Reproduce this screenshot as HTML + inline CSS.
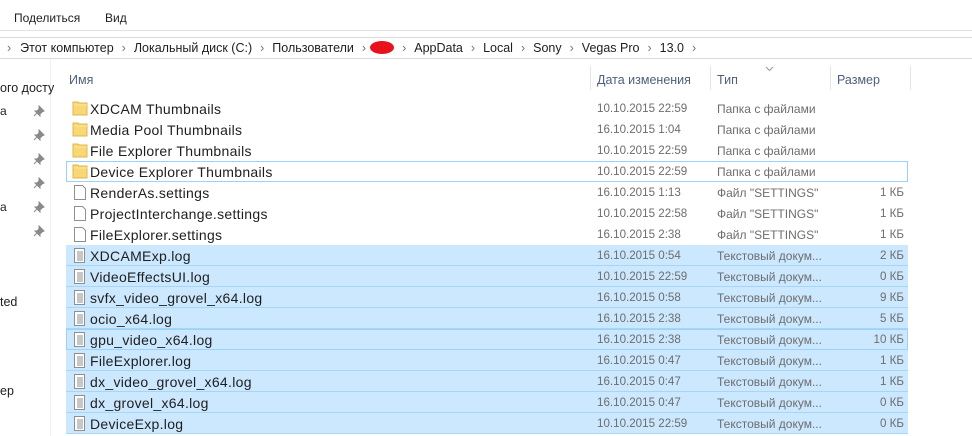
<!DOCTYPE html>
<html><head><meta charset="utf-8"><style>
*{margin:0;padding:0;box-sizing:border-box}
body{width:972px;height:436px;background:#fff;font-family:"Liberation Sans",sans-serif;font-size:12px;color:#1e1e1e;position:relative;overflow:hidden}
.a{position:absolute;white-space:nowrap}
.row{position:absolute;left:66px;width:842px;height:21px}
.sel{background:#cce8ff;border-bottom:1px solid #a9d5f5}
.n{position:absolute;left:24px;top:3px;font-size:14px;letter-spacing:.3px}
.d{position:absolute;left:531px;top:4px;color:#6d6d6d;font-size:11.6px}
.t{position:absolute;left:651px;top:4px;color:#6d6d6d}
.s{position:absolute;right:4px;top:4px;color:#6d6d6d;font-size:11.6px}
.ic{position:absolute;left:6px;top:2px}
.pin{position:absolute;left:33px}
</style></head><body>
<div class="a" style="left:14px;top:11px;font-size:12px">Поделиться</div>
<div class="a" style="left:105px;top:11px;font-size:12px">Вид</div>
<div class="a" style="left:0;top:30px;width:972px;height:1px;background:#e3e3e3"></div>
<div class="a" style="left:0;top:37px;width:972px;height:1px;background:#d9d9d9"></div>
<div class="a" style="left:0;top:58px;width:972px;height:1px;background:#d9d9d9"></div>
<div class="a" style="left:0;top:41px;font-size:12.5px;word-spacing:0">
<span style="color:#777;margin:0 9px 0 7px">›</span>Этот компьютер<span style="color:#777;margin:0 8px">›</span>Локальный диск (C:)<span style="color:#777;margin:0 8px">›</span>Пользователи<span style="color:#777;margin:0 4px 0 8px">›</span><span style="display:inline-block;width:24px;height:13px;background:#e8101a;border-radius:50%;vertical-align:-2px"></span><span style="color:#777;margin:0 8px">›</span>AppData<span style="color:#777;margin:0 8px">›</span>Local<span style="color:#777;margin:0 8px">›</span>Sony<span style="color:#777;margin:0 8px">›</span>Vegas Pro<span style="color:#777;margin:0 8px">›</span>13.0<span style="color:#777;margin:0 8px">›</span></div>
<div class="a" style="left:50px;top:59px;width:1px;height:377px;background:#f0f0f0"></div>
<div class="a" style="left:0;top:81px;font-size:12.5px">ого досту</div>
<div class="a" style="left:0;top:104px">а</div>
<div class="a" style="left:0;top:200px">а</div>
<div class="a" style="left:0;top:295px;font-size:12.5px">ted</div>
<div class="a" style="left:0;top:384px;font-size:12.5px">ер</div>
<div id="pins"></div>
<div class="a" style="left:69px;top:73px;color:#4c607a;font-size:12.5px">Имя</div>
<div class="a" style="left:597px;top:73px;color:#4c607a;font-size:12.5px">Дата изменения</div>
<div class="a" style="left:717px;top:73px;color:#4c607a;font-size:12.5px">Тип</div>
<div class="a" style="left:837px;top:73px;color:#4c607a;font-size:12.5px">Размер</div>
<svg class="a" style="left:765px;top:66px" width="9" height="6"><path d="M1 1l3.5 3.5L8 1" fill="none" stroke="#999"/></svg>
<div class="a" style="left:590px;top:66px;width:1px;height:24px;background:#e5e5e5"></div>
<div class="a" style="left:710px;top:66px;width:1px;height:24px;background:#e5e5e5"></div>
<div class="a" style="left:830px;top:66px;width:1px;height:24px;background:#e5e5e5"></div>
<div class="a" style="left:910px;top:66px;width:1px;height:24px;background:#e5e5e5"></div>
<div id="rows"></div>
<script>
var ph='';
[104,128,152,176,200,224].forEach(function(y){ph+='<svg class="a pin" style="top:'+(y+1)+'px" width="12" height="12"><path d="M6 1l5 5-2 1-2 2 0 2-5-5 2 0 2-2z M4 8L1 11" fill="#8a8a8a" stroke="#8a8a8a" stroke-width="1"/></svg>';});
document.getElementById('pins').innerHTML=ph;
var F='<svg class="ic" width="16" height="16"><path d="M1 2h5l1 1h8v12H1z" fill="#f8d775" stroke="#e0b44c"/><path d="M2 5h13" stroke="#fbe6a5"/></svg>';
var P='<svg class="ic" width="16" height="16"><path d="M2.5 1.5h8l3 3v11h-11z" fill="#fff" stroke="#8f8f8f"/></svg>';
var L='<svg class="ic" width="16" height="16"><path d="M2.5 1.5h10v14h-10z" fill="#fff" stroke="#8f8f8f"/><path d="M5 5h6M5 7h6M5 9h6M5 11h6M5 13h6" stroke="#8f8f8f"/></svg>';
var d=[
[F,'XDCAM Thumbnails','10.10.2015 22:59','Папка с файлами','',0],
[F,'Media Pool Thumbnails','16.10.2015 1:04','Папка с файлами','',0],
[F,'File Explorer Thumbnails','10.10.2015 22:59','Папка с файлами','',0],
[F,'Device Explorer Thumbnails','10.10.2015 22:59','Папка с файлами','',2],
[P,'RenderAs.settings','16.10.2015 1:13','Файл "SETTINGS"','1 КБ',0],
[P,'ProjectInterchange.settings','10.10.2015 22:58','Файл "SETTINGS"','1 КБ',0],
[P,'FileExplorer.settings','16.10.2015 2:38','Файл "SETTINGS"','1 КБ',0],
[L,'XDCAMExp.log','16.10.2015 0:54','Текстовый докум...','2 КБ',1],
[L,'VideoEffectsUI.log','10.10.2015 22:59','Текстовый докум...','0 КБ',1],
[L,'svfx_video_grovel_x64.log','16.10.2015 0:58','Текстовый докум...','9 КБ',1],
[L,'ocio_x64.log','16.10.2015 2:38','Текстовый докум...','5 КБ',1],
[L,'gpu_video_x64.log','16.10.2015 2:38','Текстовый докум...','10 КБ',3],
[L,'FileExplorer.log','16.10.2015 0:47','Текстовый докум...','1 КБ',1],
[L,'dx_video_grovel_x64.log','16.10.2015 0:47','Текстовый докум...','1 КБ',1],
[L,'dx_grovel_x64.log','16.10.2015 0:47','Текстовый докум...','0 КБ',1],
[L,'DeviceExp.log','10.10.2015 22:59','Текстовый докум...','0 КБ',1]];
var h='';
d.forEach(function(r,i){
var st='top:'+(98+21*i)+'px;';
var c='row';
if(r[5]==1)c+=' sel';
if(r[5]==2)st+='box-shadow:inset 0 0 0 1px #99d1ff;';
if(r[5]==3)st+='background:#cce8ff;box-shadow:inset 0 0 0 1px #99d1ff;';
h+='<div class="'+c+'" style="'+st+'">'+r[0]+'<div class="n">'+r[1]+'</div><div class="d">'+r[2]+'</div><div class="t">'+r[3]+'</div><div class="s">'+r[4]+'</div></div>';
});
document.getElementById('rows').innerHTML=h;
</script>
</body></html>
